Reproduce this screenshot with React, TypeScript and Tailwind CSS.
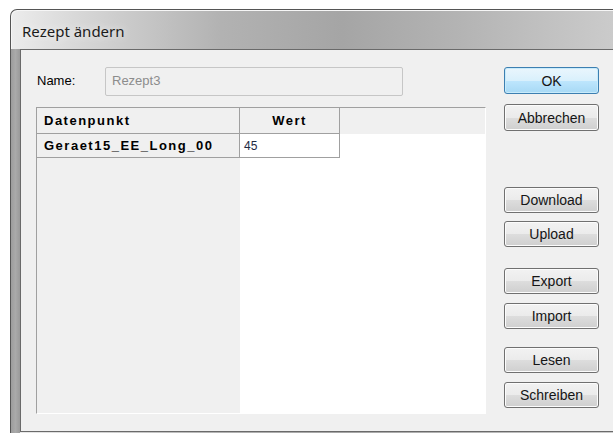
import React from "react";

const buttons = [
  { label: "OK", gap: "mt-[17px] h-[27px]", primary: true },
  { label: "Abbrechen", gap: "mt-[10px] h-[27px]" },
  { label: "Download", gap: "mt-[56px] h-[26px]" },
  { label: "Upload", gap: "mt-[8px] h-[26px]" },
  { label: "Export", gap: "mt-[21px] h-[26px]" },
  { label: "Import", gap: "mt-[9px] h-[26px]" },
  { label: "Lesen", gap: "mt-[18px] h-[26px]" },
  { label: "Schreiben", gap: "mt-[9px] h-[26px]" },
];

function DialogButton({ label, gap, primary }: { label: string; gap: string; primary?: boolean }) {
  return (
    <button
      className={
        gap +
        " w-[95px] rounded-[3px] border text-[14px] leading-none text-[#151515] flex items-center justify-center " +
        (primary
          ? "border-[#3c7fb1] bg-[linear-gradient(to_bottom,#eaf6fd_0%,#d9f0fc_50%,#bee6fd_51%,#a7d9f5_100%)] shadow-[inset_0_0_0_1px_#c8ebfb]"
          : "border-[#707070] bg-[linear-gradient(to_bottom,#f2f2f2_0%,#ebebeb_50%,#dddddd_51%,#cfcfcf_100%)] shadow-[inset_0_0_0_1px_#fcfcfc]")
      }
    >
      {label}
    </button>
  );
}

export default function App() {
  return (
    <div className="w-[613px] h-[433px] bg-white overflow-hidden pl-[10px] pt-[9px] font-['Liberation_Sans',Arial,sans-serif]">
      <div className="h-[424px] flex flex-col rounded-tl-[7px] border-l border-t border-[#555] bg-[linear-gradient(to_right,#ececec_0%,#d6d6d6_12%,#b2b2b2_35%,#a5a5a5_55%,#b4b4b4_75%,#cbcbcb_100%)] shadow-[inset_1px_1px_0_#f6f6f6]">
        {/* title bar */}
        <div className="h-[39px] shrink-0 flex items-center pl-[11px] pt-[4px] text-[15px] text-[#1b1b1b] font-['Noto_Sans',sans-serif] [text-shadow:0_0_8px_rgba(255,255,255,0.9)]">
          Rezept ändern
        </div>

        <div className="flex-1 flex">
          {/* left frame edge */}
          <div className="w-[9px] shrink-0 bg-[linear-gradient(to_right,#9c9c9c,#aaaaaa_50%,#9a9a9a)]" />

          <div className="flex-1 flex border-t border-l border-b border-[#6a6a6a] bg-[#f0f0f0] mb-[1px]">
            <div className="pl-[15px] flex flex-col">
              <div className="mt-[16px] flex items-center h-[30px]">
                <span className="w-[69px] pl-[1px] text-[13px] text-black">Name:</span>
                <div className="w-[298px] h-[29px] rounded-[2px] border border-[#c6c6c6] bg-[#f0f0f0] flex items-center pl-[6px] text-[13px] text-[#8c8c8c]">
                  Rezept3
                </div>
              </div>

              {/* recipe grid */}
              <div className="mt-[11px] w-[450px] h-[307px] flex flex-col border-t border-l border-[#a0a0a0] border-r border-b border-r-white border-b-white bg-white text-[13px] text-black">
                <div className="h-[26px] flex bg-[#f0f0f0] font-bold tracking-[1.5px]">
                  <div className="w-[203px] border-r border-b border-[#a0a0a0] flex items-center pl-[7px]">Datenpunkt</div>
                  <div className="w-[100px] border-r border-b border-[#a0a0a0] flex items-center justify-center">Wert</div>
                  <div className="flex-1" />
                </div>
                <div className="h-[24px] flex">
                  <div className="w-[203px] bg-[#f0f0f0] border-r border-b border-[#a0a0a0] flex items-center pl-[7px] font-bold tracking-[1.5px]">
                    Geraet15_EE_Long_00
                  </div>
                  <div className="w-[100px] border-r border-b border-[#a0a0a0] flex items-center pl-[4px] text-[12px] text-[#1d2a44]">45</div>
                  <div className="flex-1" />
                </div>
                <div className="flex-1 flex">
                  <div className="w-[203px] bg-[#f0f0f0]" />
                  <div className="flex-1" />
                </div>
              </div>
            </div>

            <div className="ml-[18px] flex flex-col">
              {buttons.map((b) => (
                <DialogButton key={b.label} {...b} />
              ))}
            </div>
          </div>
        </div>
      </div>
    </div>
  );
}
